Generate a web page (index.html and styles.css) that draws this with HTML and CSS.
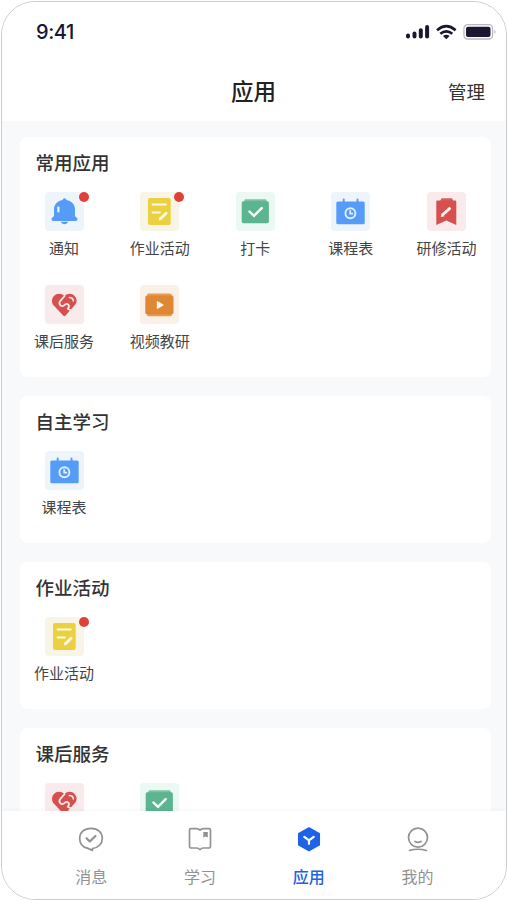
FILE: index.html
```html
<!DOCTYPE html>
<html lang="zh-CN">
<head>
<meta charset="utf-8">
<title>应用</title>
<link rel="stylesheet" href="styles.css">
</head>
<body>
<svg class="sprite" aria-hidden="true">
  <symbol id="bell" viewBox="0 0 39 39">
    <path fill="#559bf8" d="M19.500 6.300c1.100 0 1.700.8 1.900 1.600 5.600 1.100 8.600 4.600 8.600 9.600v6c0 .8.500 1.300 1.300 1.700 1.900 1 1.400 3.800-.8 3.800h-22c-2.200 0-2.700-2.800-.8-3.800.8-.4 1.300-.9 1.300-1.700v-6c0-5 3-8.500 8.600-9.600.2-.8.800-1.600 1.900-1.600z"/>
    <path fill="#559bf8" d="M15.800 29.800h7.400c-.5 1.600-1.900 2.400-3.700 2.400s-3.200-.8-3.700-2.400z"/>
    <rect x="12.300" y="14.500" width="2.200" height="6" rx="1" fill="#e5f5ff"/>
  </symbol>
  <symbol id="note" viewBox="0 0 39 39">
    <rect x="8" y="6" width="22.700" height="27" rx="2" fill="#ebd141"/>
    <g fill="none" stroke="#fffbe8" stroke-width="2.200" stroke-linecap="round"><path d="M12.700 12.500h13M12.700 20.500h7"/><path stroke-width="2.800" d="m20.700 26.500 5.400-5.200"/></g>
    <path fill="#fffbe8" d="m18.900 28.600.8-3.600 2.500 2.600z"/>
  </symbol>
  <symbol id="check" viewBox="0 0 39 39">
    <path fill="#79c3a3" d="M9 7.300h21l2 4H7z"/>
    <rect x="5.700" y="9.300" width="27.200" height="21.900" rx="1.600" fill="#5cb590"/>
    <path d="m13.500 19.600 4.500 4.200 7.700-7.600" fill="none" stroke="#f4fff9" stroke-width="2.500" stroke-linecap="round"/>
  </symbol>
  <symbol id="calendar" viewBox="0 0 39 39">
    <path d="M12.700 7.500v4M26.500 7.500v4" stroke="#559bf8" stroke-width="2" stroke-linecap="round"/>
    <rect x="5.300" y="9.500" width="28.400" height="22.800" rx="1.600" fill="#559bf8"/>
    <circle cx="19.400" cy="21.300" r="5" fill="none" stroke="#e0f0ff" stroke-width="1.900"/>
    <path d="M19.200 18.300v3.300h2.900" fill="none" stroke="#e0f0ff" stroke-width="1.700"/>
  </symbol>
  <symbol id="ribbon" viewBox="0 0 39 39">
    <path fill="#d3605f" d="M14.500 6.300H25l1.500 3H13z"/>
    <path fill="#d5504e" d="M10.300 8.600h18q1 0 1 1V33l-10-4.500-10 4.500V9.600q0-1 1-1z"/>
    <path d="m16.500 22 6-5.300" stroke="#fff0ee" stroke-width="3" stroke-linecap="round"/>
    <path fill="#fff0ee" d="m13.800 25 .9-4 3 3.200z"/>
  </symbol>
  <symbol id="heart" viewBox="0 0 39 39">
    <path fill="#d5504e" d="M19.400 11c3.500-3 7.700-2.700 10.200-.1 2.700 2.900 2.600 6.800.1 9.400L20.600 30.500q-1.200 1.300-2.400 0L9 20.800c-2.700-2.700-2.600-7 0-9.800 2.700-2.800 7-2.900 10.400 0z"/>
    <path d="m20 10.500-4.600 5.300c-2.600 3.500.9 6.800 4 4.300q2.100-2.300 4.100-.2c1.200 1.400.3 2.700-.8 3.900l3.800 1.800" fill="none" stroke="#f9e8e8" stroke-width="1.800" stroke-linejoin="round"/>
    <path d="M24.300 12.500q3.700-.1 4 3.500" fill="none" stroke="#f9e8e8" stroke-width="1.500" stroke-linecap="round"/>
  </symbol>
  <symbol id="video" viewBox="0 0 39 39">
    <rect x="7" y="8.600" width="24.800" height="22.600" rx="1.500" fill="#e99c4b"/>
    <rect x="5.300" y="10.600" width="28.200" height="18.800" rx="1.800" fill="#df8735"/>
    <path fill="#fff8eb" stroke="#fff8eb" stroke-linejoin="round" d="M17.300 16.500v7l6-3.500z"/>
  </symbol>
</svg>
<div class="phone">
  <header class="header">
    <div class="status">
      <span class="time">9:41</span>
      <svg class="signals" width="92" height="18" viewBox="0 0 92 18">
        <g stroke="#191731" stroke-width="4" stroke-linecap="round"><path d="M3 12.500v1M9.500 10.500v3M15.800 7.300v6.200M22.100 4v9.500"/></g>
        <g fill="none" stroke="#191731" stroke-width="2.700"><path d="M32 7.200q9.300-8 18.600 0M35.300 10.800q6-5 12 0"/></g>
        <path fill="#191731" d="M38 13q3.300-2.700 6.600 0l-3.300 3.300z"/>
        <rect x="59" y="1.700" width="28.500" height="14.300" rx="3.600" fill="#fff" stroke="#b9b8c2" stroke-width="1.300"/>
        <rect x="61" y="3.700" width="24.500" height="10.300" rx="2" fill="#191731"/>
        <path fill="#b9b8c2" d="M89.300 6.500q2.600 2.300 0 4.700z"/>
      </svg>
    </div>
    <div class="titlebar">
      <span></span>
      <h1>应用</h1>
      <span class="manage">管理</span>
    </div>
  </header>
  <main class="content">
    <section class="card">
      <h2>常用应用</h2>
      <div class="apps">
        <div class="app"><div class="tile blue dot"><svg><use href="#bell"/></svg></div><span>通知</span></div>
        <div class="app"><div class="tile yellow dot"><svg><use href="#note"/></svg></div><span>作业活动</span></div>
        <div class="app"><div class="tile green"><svg><use href="#check"/></svg></div><span>打卡</span></div>
        <div class="app"><div class="tile blue"><svg><use href="#calendar"/></svg></div><span>课程表</span></div>
        <div class="app"><div class="tile red"><svg><use href="#ribbon"/></svg></div><span>研修活动</span></div>
        <div class="app"><div class="tile red"><svg><use href="#heart"/></svg></div><span>课后服务</span></div>
        <div class="app"><div class="tile orange"><svg><use href="#video"/></svg></div><span>视频教研</span></div>
      </div>
    </section>
    <section class="card">
      <h2>自主学习</h2>
      <div class="apps">
        <div class="app"><div class="tile blue"><svg><use href="#calendar"/></svg></div><span>课程表</span></div>
      </div>
    </section>
    <section class="card">
      <h2>作业活动</h2>
      <div class="apps">
        <div class="app"><div class="tile yellow dot"><svg><use href="#note"/></svg></div><span>作业活动</span></div>
      </div>
    </section>
    <section class="card">
      <h2>课后服务</h2>
      <div class="apps">
        <div class="app"><div class="tile red"><svg><use href="#heart"/></svg></div></div>
        <div class="app"><div class="tile green"><svg><use href="#check"/></svg></div></div>
      </div>
    </section>
  </main>
  <nav class="tabs">
    <div class="tab">
      <svg viewBox="0 0 28 28"><path d="M15.500 25.400v-1.900c5.700-.6 9.800-4.700 9.800-10.100 0-6-4.300-10-11.300-10S2.700 7.400 2.700 13.400c0 5 3.100 8.600 7.500 9.700z"/><path stroke-width="2.200" d="m9.500 13.300 3.300 3.200 5.700-5.500"/></svg>
      <span>消息</span>
    </div>
    <div class="tab">
      <svg viewBox="0 0 28 28"><path d="M14 5q-1.500-1.300-3.500-1.300H5Q3.500 3.700 3.500 5.200v16.300q0 1.500 1.500 1.500h5.500q2 0 3.500 1.700 1.500-1.700 3.500-1.700H23q1.500 0 1.500-1.500V5.200q0-1.500-1.500-1.500h-5.500Q15.500 3.700 14 5z"/><path class="solid" d="M17.300 7h4.500v5.500l-2.200-1-2.300 1z"/></svg>
      <span>学习</span>
    </div>
    <div class="tab active">
      <svg viewBox="0 0 28 28"><path class="hex" d="m14 3 10.200 5.700v11.100L14 25.600 3.800 19.800V8.700z"/><path class="mark" d="m9.300 11.800 4.700 3.500 4.700-3.500M14 15.300v3.500"/></svg>
      <span>应用</span>
    </div>
    <div class="tab">
      <svg viewBox="0 0 28 28"><circle cx="14" cy="12.600" r="9.500"/><path d="M11 16.500q3 1.700 6 0M5.500 25.500q8.500-2.500 17 0"/></svg>
      <span>我的</span>
    </div>
  </nav>
</div>
</body>
</html>
```

FILE: styles.css
```css
* { box-sizing: border-box; }
body {
  margin: 0;
  padding: 1px 0 0 1px;
  height: 900px;
  overflow: hidden;
  background: #fff;
  font-family: "Noto Sans CJK SC", sans-serif;
  color: #333;
}
h1, h2 { margin: 0; }
.sprite { display: none; }
.phone {
  width: 506px;
  height: 899px;
  border: 1px solid #ccc;
  border-radius: 34px;
  overflow: hidden;
  display: flex;
  flex-direction: column;
  background: #f8f9fb;
}
.header { flex: none; height: 119px; background: #fff; }
.status {
  height: 60px;
  padding: 0 9px 0 34px;
  display: flex;
  align-items: center;
  justify-content: space-between;
}
.time {
  font: 500 20px/24px Inter, sans-serif;
  letter-spacing: -.4px;
  color: #191731;
}
.signals { display: block; }
.titlebar {
  height: 57px;
  padding: 0 21px 0 20px;
  display: grid;
  grid-template-columns: 1fr auto 1fr;
  align-items: center;
}
h1 { font-size: 22.500px; font-weight: 500; line-height: 57px; color: #222; }
.manage { justify-self: end; font-size: 18.500px; }
.content {
  flex: 1;
  min-height: 0;
  overflow: hidden;
  padding: 16px 14px 0 18px;
  display: flex;
  flex-direction: column;
  gap: 18.500px;
}
.card {
  flex: none;
  width: 470.500px;
  height: 147.500px;
  padding: 13px 14px 0;
  background: #fff;
  border-radius: 8px;
}
.card:first-child { height: 240px; }
h2 { padding-left: 1.500px; font-size: 18.500px; line-height: 24px; font-weight: 500; }
.apps {
  margin-top: 18px;
  display: grid;
  grid-template-columns: repeat(5, 60px);
  justify-content: space-between;
  row-gap: 17px;
}
.app {
  height: 76px;
  display: flex;
  flex-direction: column;
  align-items: center;
}
.app span { margin-top: 7px; font-size: 15px; line-height: 20px; white-space: nowrap; color: #444; }
.tile { position: relative; width: 39px; height: 39px; border-radius: 4px; }
.tile svg { display: block; width: 39px; height: 39px; }
.blue { background: #edf4fa; }
.yellow { background: #f8f5e6; }
.green { background: #ebf8f3; }
.red { background: #f9eaeb; }
.orange { background: #fbf0e8; }
.dot::after {
  content: "";
  position: absolute;
  top: 0;
  right: -5px;
  width: 10px;
  height: 10px;
  border-radius: 50%;
  background: #e04038;
}
.tabs {
  position: relative;
  flex: none;
  height: 88px;
  padding: 14px 34px 0 35px;
  display: grid;
  grid-template-columns: repeat(4, 1fr);
  background: #fff;
  box-shadow: 0 -1px 5px rgba(0, 0, 0, .04);
}
.tab {
  display: flex;
  flex-direction: column;
  align-items: center;
  font-size: 16px;
  line-height: 22px;
  color: #929292;
}
.tab svg {
  width: 28px;
  height: 28px;
  margin-bottom: 12px;
  fill: none;
  stroke: #929292;
  stroke-width: 1.700;
  stroke-linejoin: round;
  stroke-linecap: round;
}
.tab .solid { fill: #929292; stroke: none; }
.tab .hex { fill: #1e62e6; stroke: #1e62e6; }
.tab .mark { stroke: #fff; stroke-width: 2.200; }
.active { color: #1e62e6; font-weight: 500; }
```
